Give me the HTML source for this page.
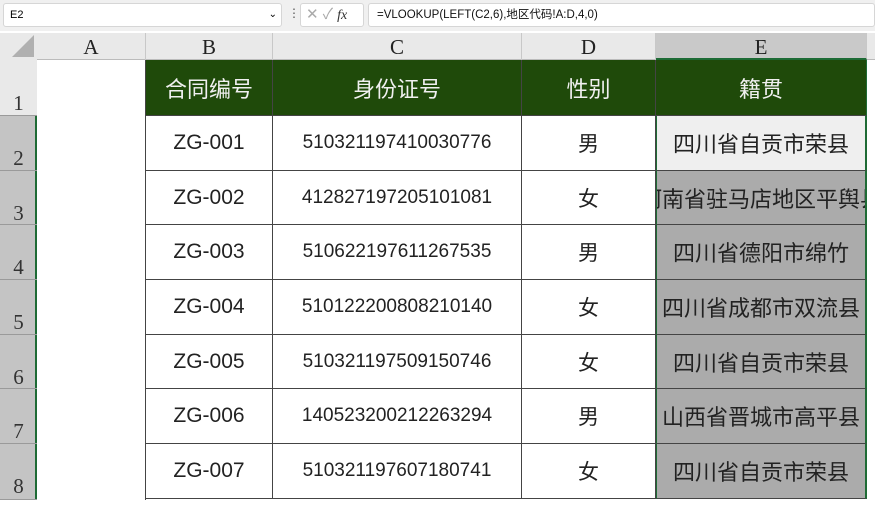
<!DOCTYPE html>
<html><head><meta charset="utf-8"><style>
*{margin:0;padding:0;box-sizing:border-box}
body{width:875px;height:500px;overflow:hidden;background:#fff;position:relative;font-family:"Liberation Sans","Noto Sans CJK SC",sans-serif}
.a{position:absolute}
.hd{position:absolute;top:33px;height:27px;font-family:"Liberation Serif","Noto Serif CJK SC",serif;font-size:21px;color:#222;text-align:center;line-height:28px;border-right:1px solid #c8c8c8}
.rh{position:absolute;left:0;width:37px;font-family:"Liberation Serif",serif;font-size:21px;color:#333;text-align:center;border-bottom:1px solid #9a9a9a}
.c{position:absolute;display:flex;align-items:center;justify-content:center;font-size:21px;color:#222;white-space:nowrap;overflow:hidden;border-right:1px solid #444;border-bottom:1px solid #444}
.th{background:#1f4a0a;color:#f0f0f0;font-size:22px}
</style></head><body>
<div class="a" style="left:0;top:0;width:875px;height:31px;background:#f0f0f0"></div>
<div class="a" style="left:3px;top:3px;width:279px;height:24px;background:#fff;border:1px solid #d6d6d6;border-radius:3px;font-size:11px;line-height:22px;padding-left:6px">E2<span style="position:absolute;right:4px;font-size:10px">&#8964;</span></div>
<div class="a" style="left:288px;top:6px;font-size:12px;color:#555">⋮</div>
<div class="a" style="left:300px;top:3px;width:64px;height:24px;background:#fff;border:1px solid #d6d6d6;border-radius:3px;font-size:15px;color:#aaa;line-height:22px;padding-left:5px">✕ ✓ <i style="font-family:'Liberation Serif',serif;color:#333;font-size:14px">fx</i></div>
<div class="a" style="left:368px;top:3px;width:507px;height:24px;background:#fff;border:1px solid #d6d6d6;border-radius:3px;font-size:11.5px;line-height:22px;padding-left:8px;color:#111">=VLOOKUP(LEFT(C2,6),地区代码!A:D,4,0)</div>
<div class="a" style="left:0;top:33px;width:875px;height:27px;background:#e9e9e9;border-bottom:1px solid #bbb"></div>
<div class="a" style="left:0;top:33px;width:37px;height:27px;background:#e9e9e9"><div style="position:absolute;right:3px;bottom:3px;width:0;height:0;border-left:22px solid transparent;border-bottom:22px solid #b0b0b0"></div></div>
<div class="hd" style="left:37px;width:109px">A</div>
<div class="hd" style="left:146px;width:127px">B</div>
<div class="hd" style="left:273px;width:249px">C</div>
<div class="hd" style="left:522px;width:134px">D</div>
<div class="hd" style="left:656px;width:211px;background:#c9c9c9;border-bottom:2px solid #1e6b35">E</div>
<div class="a" style="left:0;top:60px;width:37px;height:440px;background:#e9e9e9"></div>
<div class="a" style="left:0;top:116px;width:37px;height:384px;background:#c4c4c4;border-right:2px solid #1e6b35"></div>
<div class="rh" style="top:60px;height:56px;line-height:86px">1</div>
<div class="rh" style="top:116px;height:55px;line-height:84px">2</div>
<div class="rh" style="top:171px;height:54px;line-height:84px">3</div>
<div class="rh" style="top:225px;height:55px;line-height:84px">4</div>
<div class="rh" style="top:280px;height:55px;line-height:84px">5</div>
<div class="rh" style="top:335px;height:54px;line-height:84px">6</div>
<div class="rh" style="top:389px;height:55px;line-height:84px">7</div>
<div class="rh" style="top:444px;height:56px;line-height:84px">8</div>
<div class="a" style="left:145px;top:60px;width:1px;height:440px;background:#444"></div>
<div class="c th" style="left:146px;top:60px;width:127px;height:56px">合同编号</div>
<div class="c th" style="left:273px;top:60px;width:249px;height:56px">身份证号</div>
<div class="c th" style="left:522px;top:60px;width:134px;height:56px">性别</div>
<div class="c th" style="left:656px;top:60px;width:211px;height:56px;border-right:1px solid #1e6b35">籍贯</div>
<div id="rows"></div>
<script>
var d=[["ZG-001","510321197410030776","男","四川省自贡市荣县"],["ZG-002","412827197205101081","女","河南省驻马店地区平舆县"],["ZG-003","510622197611267535","男","四川省德阳市绵竹"],["ZG-004","510122200808210140","女","四川省成都市双流县"],["ZG-005","510321197509150746","女","四川省自贡市荣县"],["ZG-006","140523200212263294","男","山西省晋城市高平县"],["ZG-007","510321197607180741","女","四川省自贡市荣县"]];
var tops=[116,171,225,280,335,389,444,499],h="";
for(var i=0;i<7;i++){var t=tops[i],hh=tops[i+1]-t;
h+='<div class="c" style="left:146px;top:'+t+'px;width:127px;height:'+hh+'px">'+d[i][0]+'</div>';
h+='<div class="c" style="left:273px;top:'+t+'px;width:249px;height:'+hh+'px;font-size:19px">'+d[i][1]+'</div>';
h+='<div class="c" style="left:522px;top:'+t+'px;width:134px;height:'+hh+'px">'+d[i][2]+'</div>';
h+='<div class="c" style="left:656px;top:'+t+'px;width:211px;height:'+hh+'px;font-size:22px;background:'+(i==0?'#efefef':'#ababab')+';border-right:2px solid #1e6b35;border-left:1px solid #1e6b35">'+d[i][3]+'</div>';}
document.getElementById('rows').innerHTML=h;
</script>
</body></html>
